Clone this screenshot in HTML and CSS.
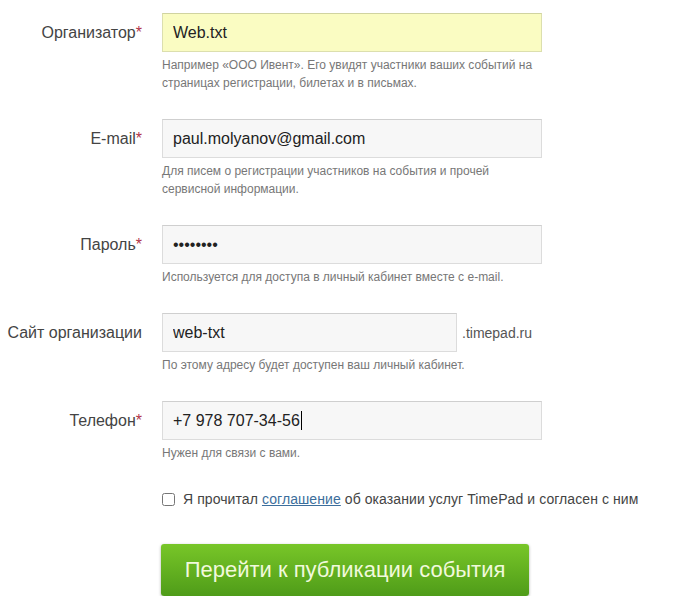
FILE: index.html
```html
<!DOCTYPE html>
<html lang="ru">
<head>
  <meta charset="UTF-8">
  <title>Регистрация организатора</title>
  <link rel="stylesheet" href="styles.css">
</head>
<body>
  <form class="signup">
    <!-- Организатор -->
    <div class="row">
      <label class="label" for="org">Организатор<span class="req">*</span></label>
      <div class="field">
        <input class="input input-filled" id="org" type="text" value="Web.txt">
        <p class="hint">Например «ООО Ивент». Его увидят участники ваших событий на страницах регистрации, билетах и в письмах.</p>
      </div>
    </div>
    <!-- E-mail -->
    <div class="row">
      <label class="label" for="mail">E-mail<span class="req">*</span></label>
      <div class="field">
        <input class="input" id="mail" type="text" value="paul.molyanov@gmail.com">
        <p class="hint">Для писем о регистрации участников на события и прочей сервисной информации.</p>
      </div>
    </div>
    <!-- Пароль -->
    <div class="row">
      <label class="label" for="pass">Пароль<span class="req">*</span></label>
      <div class="field">
        <input class="input" id="pass" type="password" value="12345678">
        <p class="hint">Используется для доступа в личный кабинет вместе с e-mail.</p>
      </div>
    </div>
    <!-- Сайт -->
    <div class="row">
      <label class="label" for="site">Сайт организации</label>
      <div class="field">
        <div class="domain">
          <input class="input input-short" id="site" type="text" value="web-txt">
          <span class="suffix">.timepad.ru</span>
        </div>
        <p class="hint">По этому адресу будет доступен ваш личный кабинет.</p>
      </div>
    </div>
    <!-- Телефон -->
    <div class="row">
      <label class="label" for="phone">Телефон<span class="req">*</span></label>
      <div class="field">
        <div class="caret-wrap">
          <input class="input" id="phone" type="text" value="+7 978 707-34-56">
          <span class="caret"></span>
        </div>
        <p class="hint">Нужен для связи с вами.</p>
      </div>
    </div>

    <div class="agree">
      <input type="checkbox" id="agree">
      <label for="agree">Я прочитал <a href="#">соглашение</a> об оказании услуг TimePad и согласен с ним</label>
    </div>

    <button class="submit" type="button">Перейти к публикации события</button>
  </form>
</body>
</html>
```

FILE: styles.css
```css
* { margin:0; padding:0; box-sizing:border-box; }
body {
  background:#fff;
  font-family:'Liberation Sans', Arial, sans-serif;
  color:#444;
  padding-top:13px;
}
.signup { width:686px; }
/* Строки формы */
.row {
  display:grid;
  grid-template-columns:142px 380px;
  column-gap:20px;
  margin-bottom:27px;
}
.label {
  text-align:right;
  font-size:16px;
  color:#444;
  line-height:39px;
}
.req { color:#b2344a; }
.input {
  display:block;
  width:380px; height:39px;
  padding:0 10px;
  font-family:inherit; font-size:16px; color:#222;
  background:#f7f7f7;
  border:1px solid #dcdcdc;
  border-top-color:#cfcfcf;
  outline:none;
}
.input-filled {
  background:#fafcc2;
  border-color:#dcdfae;
  border-top-color:#d0d3a0;
}
.input-short { width:295px; }
.hint {
  margin-top:4px;
  font-size:12px; line-height:18px;
  color:#777;
}
/* Домен */
.domain { display:flex; align-items:center; }
.suffix {
  margin-left:5px;
  font-size:14px; color:#555;
  white-space:nowrap;
}
/* Курсор в поле телефона */
.caret-wrap { position:relative; }
.caret {
  position:absolute; left:139px; top:10px;
  width:1px; height:19px;
  background:#000;
}
/* Согласие */
.agree {
  display:flex; align-items:center;
  margin-left:161px;
  font-size:14px; color:#444;
  height:20px;
}
.agree input {
  width:13px; height:13px;
  margin:0 8px 0 1px;
}
.agree label { letter-spacing:.08px; }
.agree a { color:#3c6e9c; text-decoration:underline; }
/* Кнопка */
.submit {
  display:block;
  margin:35px 0 0 161px;
  width:368px; height:52px;
  font-family:inherit; font-size:22px;
  color:#f1f9dc;
  background:linear-gradient(#78c628,#4f9c19);
  border:none; border-radius:3px;
  box-shadow:0 1px 3px rgba(0,0,0,.35);
  cursor:pointer;
}
```
